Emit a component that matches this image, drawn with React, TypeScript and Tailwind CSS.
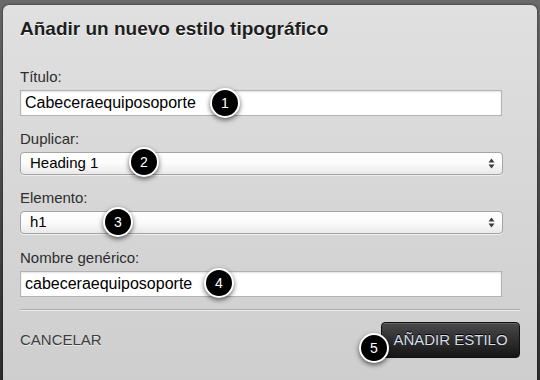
import { ReactNode } from 'react'

const font = { fontFamily: '"Liberation Sans", Arial, Helvetica, sans-serif' }

function Label({ children }: { children: ReactNode }) {
  return <div className="mb-[4px] h-[18px] text-[15px] leading-[18px] text-[#2e2e2e]">{children}</div>
}

function TextInput({ value }: { value: string }) {
  return (
    <div className="flex h-[26px] w-[482px] items-center border border-[#b3b3b3] bg-white pl-[4px] text-[16px] text-black shadow-[inset_0_1px_2px_rgba(0,0,0,0.12)]">
      {value}
    </div>
  )
}

function Select({ value }: { value: string }) {
  return (
    <div className="flex h-[23px] w-[483px] items-center justify-between rounded-[4px] border border-[#a4a4a4] bg-gradient-to-b from-white via-[#fbfbfb] to-[#e9e9e9] pl-[9px] pr-[7px] text-[15px] text-black shadow-[0_1px_0_rgba(255,255,255,0.6)]">
      <span>{value}</span>
      <svg width="7" height="11" viewBox="0 0 7 11" className="text-[#3a3a3a]">
        <path d="M3.5 0.5 L6.5 4.5 L0.5 4.5 Z" fill="currentColor" />
        <path d="M3.5 10.5 L6.5 6.5 L0.5 6.5 Z" fill="currentColor" />
      </svg>
    </div>
  )
}

function Callout({ n, x, y }: { n: number; x: number; y: number }) {
  return (
    <div
      className="absolute flex h-[30px] w-[30px] items-center justify-center rounded-full border-2 border-white bg-black text-[14px] text-white shadow-[0_2px_5px_rgba(0,0,0,0.6)]"
      style={{ left: x - 15, top: y - 15 }}
    >
      {n}
    </div>
  )
}

export default function App() {
  return (
    <div
      className="relative h-[380px] w-[540px] overflow-hidden bg-gradient-to-b from-[#6a6a6a] to-[#2e2e2e] px-[3px] pt-[5px]"
      style={font}
    >
      <div className="h-[400px] rounded-t-[6px] bg-gradient-to-b from-[#e0e0e0] to-[#cdcdcd] px-[17px] pt-[12px] shadow-[0_0_3px_rgba(0,0,0,0.6)]">
        <h1 className="h-[24px] text-[19px] font-bold leading-[24px] text-[#1e1e1e] [text-shadow:0_1px_0_#fff]">
          Añadir un nuevo estilo tipográfico
        </h1>

        <div className="mt-[27px]">
          <Label>Título:</Label>
          <TextInput value="Cabeceraequiposoporte" />
        </div>

        <div className="mt-[14px]">
          <Label>Duplicar:</Label>
          <Select value="Heading 1" />
        </div>

        <div className="mt-[14px]">
          <Label>Elemento:</Label>
          <Select value="h1" />
        </div>

        <div className="mt-[15px]">
          <Label>Nombre genérico:</Label>
          <TextInput value="cabeceraequiposoporte" />
        </div>

        <div className="mt-[12px] h-[2px] w-[500px] border-t border-[#aeaeae] border-b border-b-[#ececec]" />

        <div className="mt-[11px] flex w-[500px] items-center justify-between">
          <span className="text-[15px] text-[#3d3d3d] [text-shadow:0_1px_0_rgba(255,255,255,0.6)]">CANCELAR</span>
          <button className="h-[36px] w-[139px] rounded-[4px] border border-[#111] bg-gradient-to-b from-[#4a4a4a] to-[#161616] text-[15px] text-[#d6dce8] shadow-[inset_0_1px_0_rgba(255,255,255,0.15)] [text-shadow:0_-1px_0_#000]">
            AÑADIR ESTILO
          </button>
        </div>
      </div>

      <Callout n={1} x={225} y={103} />
      <Callout n={2} x={144} y={162} />
      <Callout n={3} x={118} y={222} />
      <Callout n={4} x={219} y={283} />
      <Callout n={5} x={374} y={348} />
    </div>
  )
}
